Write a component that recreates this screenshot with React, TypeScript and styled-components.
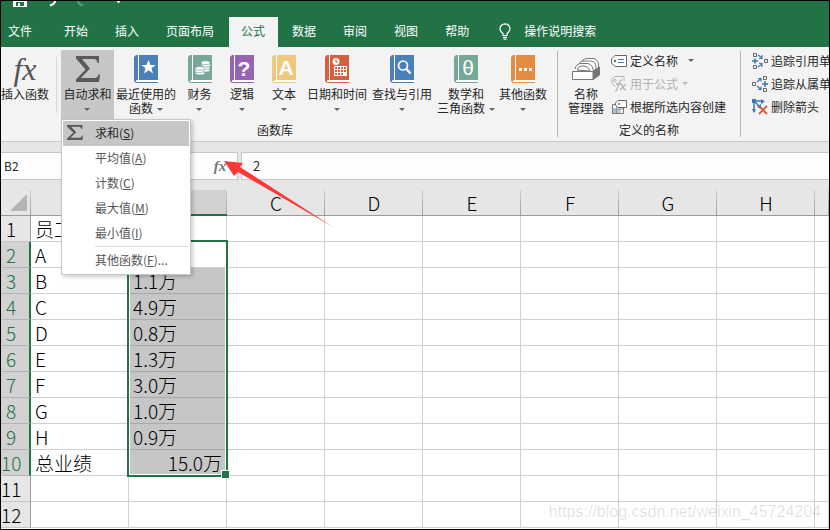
import React from "react";
import styled, { createGlobalStyle, css } from "styled-components";

const GlobalStyle = createGlobalStyle`
  * { box-sizing: border-box; }
  body { margin: 0; background: #000; }
  button, input, table { font: inherit; color: inherit; }
  button { border: 0; padding: 0; background: none; }
`;

const green = "#217346";
const gridLine = "#d0d0d0";

const Frame = styled.div`
  position: relative;
  display: flex;
  flex-direction: column;
  height: 100vh;
  border: 1px solid #000;
  overflow: hidden;
  background: #fff;
  color: #262626;
  font: 12px/14px "Noto Sans CJK SC", sans-serif;
  white-space: nowrap;
`;

/* ---------- title bar and tabs ---------- */

const TitleBar = styled.header`
  display: flex;
  flex: none;
  height: 16px;
  background: ${green};
`;

const TabBar = styled.nav`
  display: flex;
  flex: none;
  height: 30px;
  gap: 2px;
  background: ${green};
  color: #fff;
`;

const Tab = styled.button<{ $active?: boolean; $file?: boolean }>`
  padding: 0 13px 3px 12px;
  ${(p) => p.$file && css`padding: 0 18px 3px 7px;`}
  ${(p) => p.$active && css`background: #f3f3f3; color: ${green};`}
`;

const TellMe = styled.button`
  display: flex;
  align-items: center;
  gap: 13px;
  padding: 0 0 2px 15px;
`;

/* ---------- ribbon ---------- */

const Ribbon = styled.div`
  position: relative;
  z-index: 3;
  display: flex;
  flex: none;
  height: 95px;
  background: #f3f3f3;
  border-bottom: 1px solid #c8c8c8;
`;

const Group = styled.section<{ $trail?: number }>`
  display: flex;
  flex: none;
  flex-direction: column;
  padding-top: 3px;
  padding-right: ${(p) => p.$trail ?? 0}px;
`;

const GroupBody = styled.div<{ $inset?: number }>`
  display: flex;
  height: 72px;
  padding-left: ${(p) => p.$inset ?? 0}px;
`;

const GroupLabel = styled.div<{ $indent?: number }>`
  text-align: center;
  line-height: 16px;
  padding-left: ${(p) => p.$indent ?? 0}px;
`;

const Divider = styled.div<{ $small?: boolean }>`
  flex: none;
  width: 1px;
  height: ${(p) => (p.$small ? 56 : 86)}px;
  margin: ${(p) => (p.$small ? "7px 4px 0 7px" : "4px 0 0")};
  background: ${(p) => (p.$small ? "#d8d8d8" : "#b4b4b4")};
`;

const BigButton = styled.button<{ $width: number; $active?: boolean }>`
  display: flex;
  flex: none;
  flex-direction: column;
  align-items: center;
  width: ${(p) => p.$width}px;
  height: 71px;
  padding-top: 5px;
  gap: 5px;
  background: ${(p) => (p.$active ? "#c6c6c6" : "transparent")};
`;

const IconSlot = styled.span`
  display: flex;
  align-items: center;
  justify-content: center;
  height: 28px;
`;

const Caption = styled.span`
  display: flex;
  flex-direction: column;
  align-items: center;
  font-family: "Liberation Sans", "Noto Sans CJK SC", sans-serif;
`;

const CaptionLine = styled.span`
  display: flex;
  align-items: center;
  justify-content: center;
  gap: 4px;
  height: 14px;
`;

const Caret = styled.span<{ $faded?: boolean }>`
  border: 3px solid transparent;
  border-top-color: ${(p) => (p.$faded ? "#b8b8b8" : "#666")};
  border-bottom: 0;
`;

const FxMark = styled.span<{ $small?: boolean }>`
  font: italic ${(p) => (p.$small ? "bold 15px/26px" : "32px/28px")} "Liberation Serif", serif;
  color: ${(p) => (p.$small ? "#777" : "#555")};
`;

const SmallList = styled.div`
  display: flex;
  flex-direction: column;
`;

const SmallButton = styled.button<{ $disabled?: boolean }>`
  display: flex;
  align-items: center;
  gap: 3px;
  height: 23px;
  padding-bottom: 2px;
  color: ${(p) => (p.$disabled ? "#b1b1b1" : "inherit")};
  & > ${Caret} { margin-left: ${(p) => (p.$disabled ? 1 : 7)}px; }
`;

/* ---------- drop-down menu ---------- */

const MenuAnchor = styled.div`
  position: relative;
`;

const Menu = styled.div`
  position: absolute;
  left: 0;
  top: 69px;
  width: 130px;
  padding: 1px;
  border: 1px solid #c6c6c6;
  background: #fff;
  box-shadow: 2px 2px 4px rgba(0, 0, 0, 0.2);
`;

const MenuItem = styled.button<{ $active?: boolean }>`
  display: grid;
  grid-template-columns: 32px 1fr;
  align-items: center;
  width: 100%;
  height: 25px;
  padding-bottom: 2px;
  text-align: left;
  color: ${(p) => (p.$active ? "#262626" : "#555")};
  background: ${(p) => (p.$active ? "#c6c6c6" : "transparent")};
  & > svg { margin-left: 4px; }
`;

const MenuText = styled.span`
  grid-column: 2;
`;

const MenuRule = styled.hr`
  height: 1px;
  margin: 0 0 1px 32px;
  border: 0;
  background: #dedede;
`;

/* ---------- formula bar ---------- */

const FormulaBar = styled.div`
  position: relative;
  z-index: 2;
  display: flex;
  flex: none;
  gap: 3px;
  padding-top: 10px;
  background: #e6e6e6;
`;

const NameArea = styled.div`
  display: flex;
  flex: none;
  width: 237px;
  height: 28px;
  border: 1px solid #c6c6c6;
  border-left: 0;
  background: #fdfdfd;
`;

const NameInput = styled.input`
  flex: 1;
  min-width: 0;
  padding: 0 3px;
  border: 0;
  background: transparent;
`;

const FxButton = styled.button`
  position: relative;
  width: 34px;
  height: 26px;
`;

const FormulaInput = styled.input`
  flex: 1;
  min-width: 0;
  height: 28px;
  padding: 0 11px 2px;
  border: 1px solid #c6c6c6;
  border-right: 0;
  background: #fdfdfd;
  font-size: 13px;
`;

const Pointer = styled.svg`
  position: absolute;
  left: 21px;
  top: 8px;
  overflow: visible;
  pointer-events: none;
`;

/* ---------- sheet ---------- */

const SheetArea = styled.main`
  flex: 1;
  min-height: 0;
  overflow: hidden;
  padding-top: 10px;
  background: linear-gradient(#e6e6e6 36px, #fff 36px);
`;

const Sheet = styled.table`
  width: 100%;
  table-layout: fixed;
  border-collapse: separate;
  border-spacing: 0;
  font-size: 19px;
  line-height: 24px;
  font-weight: 300;
  color: #000;
`;

const IndexCol = styled.col`
  width: 30px;
`;

const DataCol = styled.col`
  width: 98px;
`;

const Corner = styled.td`
  height: 26px;
  padding: 4px 3px 4px 9px;
  border-bottom: 1px solid #9b9b9b;
  background: linear-gradient(#d0d0d0, #9b9b9b) right / 1px 100% no-repeat #e6e6e6;
  & > svg { display: block; }
`;

const ColHead = styled.th<{ $selected?: boolean }>`
  height: 26px;
  padding: 0;
  font-weight: 300;
  line-height: 22px;
  border-bottom: ${(p) => (p.$selected ? `2px solid ${green}` : "1px solid #9b9b9b")};
  background: linear-gradient(#d0d0d0, #9b9b9b) right / 1px 100% no-repeat
    ${(p) => (p.$selected ? "#d2d2d2" : "#e6e6e6")};
`;

const RowHead = styled.th<{ $selected?: boolean }>`
  height: 26px;
  padding: 1px 9px 0 0;
  font-weight: 300;
  text-align: center;
  border-right: 1px solid #9b9b9b;
  border-bottom: 1px solid #c6c6c6;
  background: #e6e6e6;
  ${(p) =>
    p.$selected &&
    css`
      padding-right: 8px;
      color: ${green};
      background: #d2d2d2;
      border-right: 2px solid ${green};
      border-bottom-color: #b4b4b4;
    `}
`;

const Cell = styled.td<{ $filled?: boolean; $right?: boolean }>`
  position: relative;
  height: 26px;
  padding: 1px 4px 0;
  border-right: 1px solid ${gridLine};
  border-bottom: 1px solid ${(p) => (p.$filled ? "#a8a8a8" : gridLine)};
  text-align: ${(p) => (p.$right ? "right" : "left")};
  background: ${(p) => (p.$filled ? "#c6c6c6" : "#fff")};
`;

const Selection = styled.div`
  position: absolute;
  z-index: 1;
  left: -2px;
  top: -2px;
  width: 101px;
  height: 237px;
  border: 2px solid ${green};
  box-shadow: inset 0 0 0 1px #fff;
  pointer-events: none;
  &::after {
    content: "";
    position: absolute;
    right: -4px;
    bottom: -4px;
    width: 7px;
    height: 7px;
    border: 1px solid #fff;
    background: ${green};
  }
`;

const Watermark = styled.div`
  position: absolute;
  right: 8px;
  bottom: 7px;
  z-index: 2;
  font: 16px/20px "Liberation Sans", sans-serif;
  color: rgba(0, 0, 0, 0.13);
`;

/* ---------- drawings ---------- */

const Sigma = ({ width, height }: { width: number; height: number }) => (
  <svg width={width} height={height} viewBox="0 0 24 26" preserveAspectRatio="none" fill="#595959">
    <path d="M0 0H23V7H21.500C21 4.500 20 3 17.500 3H6L14 12.500L5 22H18.500C21 22 21.800 20.500 22.500 18.500H24L23 26H0V23.500L9.500 13.500L0 2.500Z" />
  </svg>
);

const Book = ({ color, children }: { color: string; children: React.ReactNode }) => (
  <svg width="24" height="28" viewBox="0 0 24 28">
    <path d="M2 0H24V28H2L0 26V2Z" fill={color} />
    <path d="M4 0H5V25H4Z" fill="#fff" />
    <path d="M3 25H24V27H2Q1 26 3 25Z" fill="#fff" />
    {children}
  </svg>
);

const Star = () => (
  <path d="M14.500 5L16.400 10H21.500L17.500 13.200L19 18.500L14.500 15.300L10 18.500L11.500 13.200L7.500 10H12.600Z" fill="#fff" />
);

const Coins = () => (
  <g fill="#fff" stroke="#75a896" strokeWidth=".7">
    <ellipse cx="17.500" cy="15" rx="4.500" ry="2" />
    <ellipse cx="17.500" cy="12.500" rx="4.500" ry="2" />
    <ellipse cx="18" cy="10" rx="4.500" ry="2" />
    <ellipse cx="17.500" cy="7.700" rx="4.500" ry="2" />
    <ellipse cx="12" cy="18" rx="4.700" ry="2" />
    <ellipse cx="11.500" cy="15.700" rx="4.700" ry="2" />
    <ellipse cx="12" cy="13.400" rx="4.700" ry="2" />
  </g>
);

const BookLetter = styled.text`
  font: bold 21px "Liberation Sans", sans-serif;
  fill: #fff;
  text-anchor: middle;
`;

const ThinLetter = styled(BookLetter)`
  font-weight: 400;
`;

const Calendar = () => (
  <g>
    <circle cx="11" cy="6.500" r="3.500" fill="#fff" />
    <path d="M11 4V7H13" stroke="#d65f40" fill="none" />
    <path d="M9 11H22V21H9Z" fill="#fff" />
    <path
      d="M10 12h2v2h-2zM13 12h2v2h-2zM16 12h2v2h-2zM19 12h2v2h-2zM10 15h2v2h-2zM13 15h2v2h-2zM16 15h2v2h-2zM19 15h2v2h-2zM10 18h2v2h-2zM13 18h2v2h-2zM16 18h2v2h-2z"
      fill="#d65f40"
    />
  </g>
);

const Magnifier = () => (
  <g stroke="#fff" fill="none">
    <circle cx="13" cy="10.500" r="4.500" strokeWidth="1.700" />
    <path d="M16 13.500L20.500 18.500" strokeWidth="2.500" />
  </g>
);

const Dots = () => (
  <path d="M8 13h3v3H8zM13 13h3v3h-3zM18 13h3v3h-3z" fill="#fff" />
);

const CardBox = () => (
  <svg width="28" height="22" viewBox="0 0 28 22" fill="#fff" stroke="#777">
    <path d="M8 6Q10 1 15 .5H22Q27 2 26.500 9V17L20 21H8Z" />
    <path d="M6 9Q7 3 12 3H19Q24 4 24 9V15" />
    <path d="M3 11Q4 6 9 5.500H16Q21 7 21 12" />
    <path d="M21 13L27.500 9V17L21 21.500Z" fill="#777" />
    <path d="M5 12Q6 8 10 8H13Q17 9 18 13Z" />
    <path d="M.5 13.500H21V21.500H.5Z" />
  </svg>
);

const TagIcon = () => (
  <svg width="16" height="12" viewBox="0 0 16 12" fill="none">
    <path d="M4 .5H15.500V11.500H4L.5 8V4Z" fill="#fff" stroke="#666" />
    <circle cx="4" cy="6" r="1.200" fill="#666" />
    <path d="M7 4.500H13M7 7.500H13" stroke="#4a7ebb" />
  </svg>
);

const FormulaTagIcon = () => (
  <svg width="16" height="16" viewBox="0 0 16 16" fill="none" stroke="#b4b4b4">
    <path d="M4 11L1 7V3L4 .5H13V5" />
    <circle cx="4" cy="4.500" r="1.200" />
    <path d="M4 15C7 16 7 4 11 4M5 8H10M9 8Q11 8 12 11T15 14M15 8L9 14" strokeWidth="1.300" />
  </svg>
);

const SelectionTagIcon = () => (
  <svg width="16" height="14" viewBox="0 0 16 14" fill="none">
    <path d="M1.500 4.500H12.500V13.500H1.500Z" fill="#fff" stroke="#777" />
    <path d="M2 9H8V13H2Z" fill="#a9c4e2" />
    <path d="M1 9H12M5.500 5V13M9 5V13" stroke="#999" />
    <path d="M7 .5H15.500V7.500H7L4.500 5V3Z" fill="#fff" stroke="#666" />
    <circle cx="8" cy="4" r="1" fill="#666" />
  </svg>
);

const PrecedentsIcon = () => (
  <svg width="16" height="16" viewBox="0 0 16 16" fill="none" stroke="#666">
    <path d="M1.500 .5h3v3h-3zM1.500 12.500h3v3h-3zM12.500 6.500h3v3h-3z" />
    <path d="M0 8H6M3 5.500V10.500" stroke="#3d77b8" strokeWidth="1.500" />
    <path d="M6 2L10 5M10 2V5.500H7M6 14L10 11M10 14V10.500H7" stroke="#3d77b8" strokeWidth="1.200" />
  </svg>
);

const DependentsIcon = () => (
  <svg width="16" height="16" viewBox="0 0 16 16" fill="none" stroke="#666">
    <path d="M.5 6.500h3v3h-3zM11.500 .5h3v3h-3zM11.500 12.500h3v3h-3z" />
    <path d="M10 8H16M13 5V11" stroke="#3d77b8" strokeWidth="1.500" />
    <path d="M5 6L9 2.500M6 2.500H9V5.500M5 10L9 13.500M9 10.500V13.500H6" stroke="#3d77b8" strokeWidth="1.200" />
  </svg>
);

const RemoveArrowsIcon = () => (
  <svg width="16" height="16" viewBox="0 0 16 16" fill="none">
    <path d="M2 2H11M2 2V13M2 2L9 9" stroke="#3d77b8" strokeWidth="1.500" />
    <path d="M0 0h4v4H0zM9 0L13 2.500L9 5zM0 10h4L2 14zM5 8L9 5V10z" fill="#3d77b8" />
    <path d="M7 7L15 15M15 7L7 15" stroke="#d9583b" strokeWidth="1.800" />
  </svg>
);

const QuickAccess = () => (
  <svg width="130" height="8" viewBox="0 0 130 8" fill="none">
    <path d="M12 0H26V6H12ZM15 1H23V5H15Z" fill="#fff" fillRule="evenodd" />
    <path d="M17 2H19V5H17Z" fill="#fff" />
    <path d="M54 0Q54 3 49 4.500" stroke="#fff" strokeWidth="2" />
    <path d="M77 0Q77 3 82 4.500" stroke="#5d9a78" strokeWidth="2" />
    <path d="M115.500 0H119.500L117.500 2.500Z" fill="#fff" />
  </svg>
);

const Bulb = () => (
  <svg width="12" height="17" viewBox="0 0 12 17" fill="none" stroke="#fff" strokeWidth="1.200">
    <path d="M4 12.500V10.500Q1 8.500 1 5.500Q1.500 1 6 .8Q10.500 1 11 5.500Q11 8.500 8 10.500V12.500ZM4 14.300H8M4.500 16.200H7.500" />
  </svg>
);

/* ---------- data ---------- */

const tabs = ["开始", "插入", "页面布局", "公式", "数据", "审阅", "视图", "帮助"];

const books = [
  { lines: ["最近使用的", "函数"], width: 64, color: "#4a80ba", art: <Star /> },
  { lines: ["财务", ""], width: 43, color: "#75a896", art: <Coins /> },
  { lines: ["逻辑", ""], width: 42, color: "#9664b5", art: <BookLetter x="14" y="21">?</BookLetter> },
  { lines: ["文本", ""], width: 42, color: "#efc77d", art: <BookLetter x="14" y="20">A</BookLetter> },
  { lines: ["日期和时间", ""], width: 64, color: "#d65f40", art: <Calendar /> },
  { lines: ["查找与引用", ""], width: 66, color: "#4a80ba", art: <Magnifier /> },
  { lines: ["数学和", "三角函数"], width: 62, color: "#75a896", art: <ThinLetter x="14" y="20">θ</ThinLetter> },
  { lines: ["其他函数", ""], width: 52, color: "#e58c43", art: <Dots /> },
];

const menuItems = [
  ["求和", "S"],
  ["平均值", "A"],
  ["计数", "C"],
  ["最大值", "M"],
  ["最小值", "I"],
];

const columns = ["A", "B", "C", "D", "E", "F", "G", "H", ""];

const rows = [
  ["员工", ""],
  ["A", ""],
  ["B", "1.1万"],
  ["C", "4.9万"],
  ["D", "0.8万"],
  ["E", "1.3万"],
  ["F", "3.0万"],
  ["G", "1.0万"],
  ["H", "0.9万"],
  ["总业绩", "15.0万"],
  ["", ""],
  ["", ""],
];

const isSelectedRow = (row: number) => row >= 2 && row <= 10;

function AutoSum() {
  return (
    <MenuAnchor>
      <BigButton $width={53} $active aria-haspopup="menu" aria-expanded>
        <IconSlot><Sigma width={24} height={26} /></IconSlot>
        <Caption>
          <CaptionLine>自动求和</CaptionLine>
          <CaptionLine><Caret /></CaptionLine>
        </Caption>
      </BigButton>
      <Menu role="menu">
        {menuItems.map(([label, key], i) => (
          <MenuItem key={key} role="menuitem" $active={i === 0}>
            {i === 0 && <Sigma width={16} height={15} />}
            <MenuText>{label}(<u>{key}</u>)</MenuText>
          </MenuItem>
        ))}
        <MenuRule />
        <MenuItem role="menuitem">
          <MenuText>其他函数(<u>F</u>)...</MenuText>
        </MenuItem>
      </Menu>
    </MenuAnchor>
  );
}

export default function App() {
  return (
    <Frame>
      <GlobalStyle />
      <TitleBar><QuickAccess /></TitleBar>
      <TabBar>
        <Tab $file>文件</Tab>
        {tabs.map((t) => <Tab key={t} $active={t === "公式"}>{t}</Tab>)}
        <TellMe><Bulb />操作说明搜索</TellMe>
      </TabBar>

      <Ribbon>
        <Group $trail={8}>
          <GroupBody>
            <BigButton $width={48}>
              <IconSlot><FxMark>fx</FxMark></IconSlot>
              <Caption><CaptionLine>插入函数</CaptionLine></Caption>
            </BigButton>
            <Divider $small />
            <AutoSum />
            {books.map((b) => (
              <BigButton key={b.lines[0]} $width={b.width}>
                <IconSlot><Book color={b.color}>{b.art}</Book></IconSlot>
                <Caption>
                  <CaptionLine>{b.lines[0]}</CaptionLine>
                  <CaptionLine>{b.lines[1]}<Caret /></CaptionLine>
                </Caption>
              </BigButton>
            ))}
          </GroupBody>
          <GroupLabel>函数库</GroupLabel>
        </Group>
        <Divider />
        <Group $trail={14}>
          <GroupBody $inset={3}>
            <BigButton $width={50}>
              <IconSlot><CardBox /></IconSlot>
              <Caption>
                <CaptionLine>名称</CaptionLine>
                <CaptionLine>管理器</CaptionLine>
              </Caption>
            </BigButton>
            <SmallList>
              <SmallButton><TagIcon />定义名称<Caret /></SmallButton>
              <SmallButton $disabled disabled><FormulaTagIcon />用于公式<Caret $faded /></SmallButton>
              <SmallButton><SelectionTagIcon />根据所选内容创建</SmallButton>
            </SmallList>
          </GroupBody>
          <GroupLabel $indent={14}>定义的名称</GroupLabel>
        </Group>
        <Divider />
        <Group>
          <GroupBody $inset={11}>
            <SmallList>
              <SmallButton><PrecedentsIcon />追踪引用单</SmallButton>
              <SmallButton><DependentsIcon />追踪从属单</SmallButton>
              <SmallButton><RemoveArrowsIcon />删除箭头</SmallButton>
            </SmallList>
          </GroupBody>
        </Group>
      </Ribbon>

      <FormulaBar>
        <NameArea>
          <NameInput aria-label="名称框" defaultValue="B2" />
          <FxButton aria-label="插入函数">
            <FxMark $small>fx</FxMark>
            <Pointer width="110" height="67" viewBox="0 0 110 67">
              <path d="M0 0L19 2L16 6L109 66L14 11L10 15Z" fill="#fd3838" />
            </Pointer>
          </FxButton>
        </NameArea>
        <FormulaInput aria-label="编辑栏" defaultValue="2" />
      </FormulaBar>

      <SheetArea>
        <Sheet>
          <colgroup>
            <IndexCol />
            {columns.slice(0, -1).map((c) => <DataCol key={c} />)}
            <col />
          </colgroup>
          <thead>
            <tr>
              <Corner>
                <svg width="17" height="17" viewBox="0 0 17 17"><path d="M17 0V17H0Z" fill="#b4b4b4" /></svg>
              </Corner>
              {columns.map((c) => (
                <ColHead key={c} scope="col" $selected={c === "B"}>{c}</ColHead>
              ))}
            </tr>
          </thead>
          <tbody>
            {rows.map((row, r) => (
              <tr key={r}>
                <RowHead scope="row" $selected={isSelectedRow(r + 1)}>{r + 1}</RowHead>
                {columns.map((c, i) => (
                  <Cell
                    key={c}
                    $filled={i === 1 && r > 1 && isSelectedRow(r + 1)}
                    $right={i === 1 && r === 9}
                  >
                    {row[i]}
                    {i === 1 && r === 1 && <Selection />}
                  </Cell>
                ))}
              </tr>
            ))}
          </tbody>
        </Sheet>
      </SheetArea>
      <Watermark>https://blog.csdn.net/weixin_45724204</Watermark>
    </Frame>
  );
}
